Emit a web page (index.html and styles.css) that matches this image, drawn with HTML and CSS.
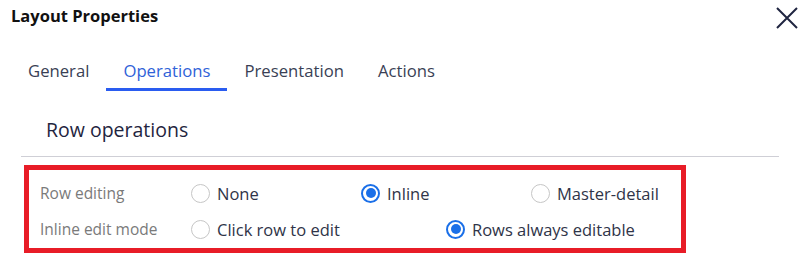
FILE: index.html
```html
<!DOCTYPE html>
<html lang="en">
<head>
    <meta charset="UTF-8">
    <title>Layout Properties</title>
    <link rel="stylesheet" href="styles.css">
</head>
<body>

<div class="dialog">
    <div class="header">
        <h1>Layout Properties</h1>
        <button class="close" aria-label="Close">
            <svg width="24" height="24" viewBox="0 0 24 24">
                <path d="M2 2 L22 22 M22 2 L2 22" stroke="#1f2540" stroke-width="2" fill="none"/>
            </svg>
        </button>
    </div>

    <div class="tabs">
        <div class="tab">General</div>
        <div class="tab active">Operations</div>
        <div class="tab">Presentation</div>
        <div class="tab">Actions</div>
    </div>

    <h2 class="section-title">Row operations</h2>
    <div class="divider"></div>

    <div class="section">
        <div class="field">
            <div class="label">Row editing</div>
            <div class="options three">
                <label class="radio"><span class="dot"></span>None</label>
                <label class="radio"><span class="dot checked"></span>Inline</label>
                <label class="radio"><span class="dot"></span>Master-detail</label>
            </div>
        </div>
        <div class="field">
            <div class="label">Inline edit mode</div>
            <div class="options two">
                <label class="radio"><span class="dot"></span>Click row to edit</label>
                <label class="radio"><span class="dot checked"></span>Rows always editable</label>
            </div>
        </div>
    </div>
</div>

</body>
</html>
```

FILE: styles.css
```css
body {
    margin: 0;
    font-family: 'Open Sans', 'Noto Sans', sans-serif;
    background: #fff;
    color: #1f2540;
}
.dialog {
    width: 806px;
    height: 259px;
    overflow: hidden;
}
.header {
    display: flex;
    justify-content: space-between;
    align-items: flex-start;
    padding: 3px 7px 0 11px;
}
h1 {
    margin: 0;
    font-size: 16.5px;
    font-weight: 700;
    color: #111;
    line-height: 26px;
}
.close {
    background: none;
    border: none;
    padding: 0;
    margin-top: 3px;
    width: 24px;
    height: 24px;
    cursor: pointer;
}
.tabs {
    display: flex;
    margin: 29px 0 0 11px;
}
.tab {
    font-size: 16.7px;
    color: #3a3f55;
    padding: 0 17px;
    line-height: 24px;
    height: 29px;
}
.tab.active {
    color: #2f62d8;
    border-bottom: 3px solid #2a5cf0;
}
.section-title {
    margin: 25px 0 0 46px;
    font-size: 19.5px;
    font-weight: 400;
    color: #1f2540;
    line-height: 28px;
}
.divider {
    margin: 12px 0 0 21px;
    width: 758px;
    height: 1px;
    background: #cfcfd6;
}
.section {
    margin: 8px 0 0 24px;
    width: 641px;
    padding: 5px 0 1px 11px;
    border: 5px solid #e81c27;
}
.field {
    display: flex;
    align-items: center;
    height: 36px;
}
.label {
    flex-shrink: 0;
    width: 151px;
    font-size: 15.5px;
    color: #7a7a7a;
}
.options {
    display: grid;
    flex-shrink: 0;
}
.options.three {
    grid-template-columns: 170px 170px 170px;
}
.options.two {
    grid-template-columns: 255px 255px;
}
.radio {
    display: flex;
    align-items: center;
    font-size: 16.5px;
    color: #2f3448;
    white-space: nowrap;
}
.dot {
    flex-shrink: 0;
    width: 17px;
    height: 17px;
    border: 1px solid #c6c6c6;
    border-radius: 50%;
    margin-right: 7px;
    position: relative;
}
.dot.checked {
    border: 2px solid #1a6fe8;
    width: 15px;
    height: 15px;
}
.dot.checked::after {
    content: "";
    position: absolute;
    left: 2.5px;
    top: 2.5px;
    width: 10px;
    height: 10px;
    border-radius: 50%;
    background: #1a6fe8;
}
```
